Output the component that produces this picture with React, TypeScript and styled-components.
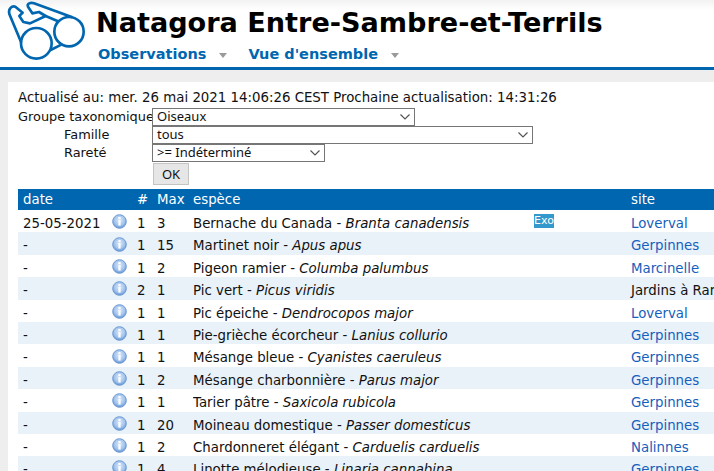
import React from "react";
import styled, { createGlobalStyle } from "styled-components";

const Global = createGlobalStyle`
  html, body { margin: 0; padding: 0; height: 471px; overflow: hidden; background: #eeeeee; }
  body { font-family: "DejaVu Sans", Verdana, sans-serif; font-size: 13.33px; color: #111; }
`;
const Page = styled.div`width: 714px; height: 471px; overflow: hidden;`;
const Header = styled.header`
  height: 67px; width: 714px; display: flex; background: linear-gradient(#f2f2f2, #ffffff 10px);
  border-bottom: 3px solid #0066b0;
`;
const LogoBox = styled.div`width: 92px; flex: none; padding-left: 4px;`;
const TitleBox = styled.div`display: flex; flex-direction: column; min-width: 0;`;
const Title = styled.h1`
  margin: 8px 0 0; font-family: "DejaVu Sans", sans-serif; font-size: 27.1px; line-height: 30px; font-weight: 700; color: #000; white-space: nowrap;
`;
const Nav = styled.nav`display: flex; margin-top: 6px; padding-left: 2px;`;
const NavItem = styled.a`
  color: #0066b0; font-family: "DejaVu Sans", sans-serif; font-weight: 700; font-size: 14.5px; line-height: 20px; display: flex; align-items: center;
  margin-right: 21px; white-space: nowrap;
  &::after { content: ""; margin-left: 13px; margin-top: 3px; border: 4px solid transparent; border-top: 5px solid #9a9a9a; border-bottom: 0; }
`;
const Content = styled.main`
  margin: 12px 0 0 8px; background: #fff; padding: 8px 0 0 10px; height: 400px; overflow: hidden;
`;
const Status = styled.div`line-height: 16px; height: 18px; white-space: nowrap;`;
const Form = styled.div`display: grid; grid-template-columns: 134px auto; justify-content: start;`;
const Label = styled.label<{ $indent?: boolean }>`
  font-size: 12.9px; line-height: 18px; padding-left: ${p => (p.$indent ? 46 : 0)}px; white-space: nowrap;
`;
const Sel = styled.div<{ $w: number }>`
  width: ${p => p.$w}px; height: 18px; box-sizing: border-box; border: 1px solid #767676; background: #fff; color: #111;
  font-family: "Noto Sans", sans-serif; font-size: 13px; line-height: 14px; padding-left: 4px; position: relative;
  svg { position: absolute; right: 2px; top: 3px; }
`;
const Ok = styled.button`
  grid-column: 2; width: 36px; height: 22px; margin: 1px 0 0 1px; background: #e6e6e6; border: 1px solid #c4c4c4; font: 13px "Noto Sans", sans-serif; color: #111; padding: 0;
`;
const Table = styled.div`margin-top: 4px; width: 800px;`;
const cols = "92px 27px 20px 36px 341px 92px 192px";
const HeadRow = styled.div`
  display: grid; grid-template-columns: ${cols}; height: 21px; line-height: 21px; background: #0066b0; color: #fff;
`;
const Row = styled.div<{ $alt: boolean }>`
  display: grid; grid-template-columns: ${cols}; height: 22.4px; line-height: 27px; background: ${p => (p.$alt ? "#e9f1f9" : "#fff")}; white-space: nowrap;
`;
const Cell = styled.div`padding-left: 5px; overflow: hidden; white-space: nowrap;`;
const IconCell = styled.div`padding-left: 2px; display: flex; align-items: center; padding-top: 1px;`;
const Num = styled.div`overflow: hidden;`;
const Latin = styled.i`font-style: italic;`;
const Exo = styled.span`
  display: block; width: 20px; margin-top: 4px; background: #3399cc; color: #fff; font-size: 11px; line-height: 14px; height: 14px; text-align: center;
`;
const SiteLink = styled.a`color: #1560bd;`;

const chevron = (
  <svg width="14" height="10" viewBox="0 0 14 10"><path d="M2.5 2.5 L7 7 L11.5 2.5" fill="none" stroke="#555" strokeWidth="1.2" /></svg>
);

const Logo = () => (
  <svg width="84" height="66" viewBox="0 0 252 198" fill="none" stroke="#0066b0" strokeWidth="8" strokeLinejoin="round">
    <path d="M52 128 L16 42 C12 26 24 16 34 20 L56 38 L46 48 L58 66 L78 70 L125 48 L105 36 L85 40 L72 20 C68 10 80 7 90 10 L205 52" />
    <path d="M125 48 L162 64 M140 150 L172 134" />
    <circle cx="97" cy="130" r="46" />
    <circle cx="195" cy="95" r="44" />
  </svg>
);

const Info = () => (
  <svg width="15" height="15" viewBox="0 0 15 15">
    <defs>
      <radialGradient id="ig" cx="50%" cy="40%" r="60%">
        <stop offset="0%" stopColor="#dbe9f9" />
        <stop offset="65%" stopColor="#a2c3ec" />
        <stop offset="100%" stopColor="#5f92d4" />
      </radialGradient>
    </defs>
    <circle cx="7.5" cy="7.5" r="6.8" fill="url(#ig)" stroke="#6d9ad4" />
    <rect x="6.4" y="3" width="2.2" height="2" fill="#fff" />
    <rect x="6.4" y="6" width="2.2" height="5.5" fill="#fff" />
  </svg>
);

const rows: [string, string, string, string, string, string, boolean][] = [
  ["25-05-2021", "1", "3", "Bernache du Canada", "Branta canadensis", "Loverval", true],
  ["-", "1", "15", "Martinet noir", "Apus apus", "Gerpinnes", true],
  ["-", "1", "2", "Pigeon ramier", "Columba palumbus", "Marcinelle", true],
  ["-", "2", "1", "Pic vert", "Picus viridis", "Jardins à Ramsart", false],
  ["-", "1", "1", "Pic épeiche", "Dendrocopos major", "Loverval", true],
  ["-", "1", "1", "Pie-grièche écorcheur", "Lanius collurio", "Gerpinnes", true],
  ["-", "1", "1", "Mésange bleue", "Cyanistes caeruleus", "Gerpinnes", true],
  ["-", "1", "2", "Mésange charbonnière", "Parus major", "Gerpinnes", true],
  ["-", "1", "1", "Tarier pâtre", "Saxicola rubicola", "Gerpinnes", true],
  ["-", "1", "20", "Moineau domestique", "Passer domesticus", "Gerpinnes", true],
  ["-", "1", "2", "Chardonneret élégant", "Carduelis carduelis", "Nalinnes", true],
  ["-", "1", "4", "Linotte mélodieuse", "Linaria cannabina", "Gerpinnes", true],
];

export default function App() {
  return (
    <Page>
      <Global />
      <Header>
        <LogoBox><Logo /></LogoBox>
        <TitleBox>
          <Title>Natagora Entre-Sambre-et-Terrils</Title>
          <Nav>
            <NavItem>Observations</NavItem>
            <NavItem>Vue d'ensemble</NavItem>
          </Nav>
        </TitleBox>
      </Header>
      <Content>
        <Status>Actualisé au: mer. 26 mai 2021 14:06:26 CEST Prochaine actualisation: 14:31:26</Status>
        <Form>
          <Label>Groupe taxonomique</Label>
          <Sel $w={263}>Oiseaux{chevron}</Sel>
          <Label $indent>Famille</Label>
          <Sel $w={381}>tous{chevron}</Sel>
          <Label $indent>Rareté</Label>
          <Sel $w={173}>&gt;= Indéterminé{chevron}</Sel>
          <Ok>OK</Ok>
        </Form>
        <Table>
          <HeadRow>
            <Cell>date</Cell><Cell /><Num>#</Num><Num>Max</Num><Num>espèce</Num><Cell /><Cell>site</Cell>
          </HeadRow>
          {rows.map((r, i) => (
            <Row key={i} $alt={i % 2 === 1}>
              <Cell>{r[0]}</Cell>
              <IconCell><Info /></IconCell>
              <Num>{r[1]}</Num>
              <Num>{r[2]}</Num>
              <Num>{r[3]} - <Latin>{r[4]}</Latin></Num>
              <Num>{i === 0 && <Exo>Exo</Exo>}</Num>
              <Cell>{r[6] ? <SiteLink>{r[5]}</SiteLink> : r[5]}</Cell>
            </Row>
          ))}
        </Table>
      </Content>
    </Page>
  );
}
